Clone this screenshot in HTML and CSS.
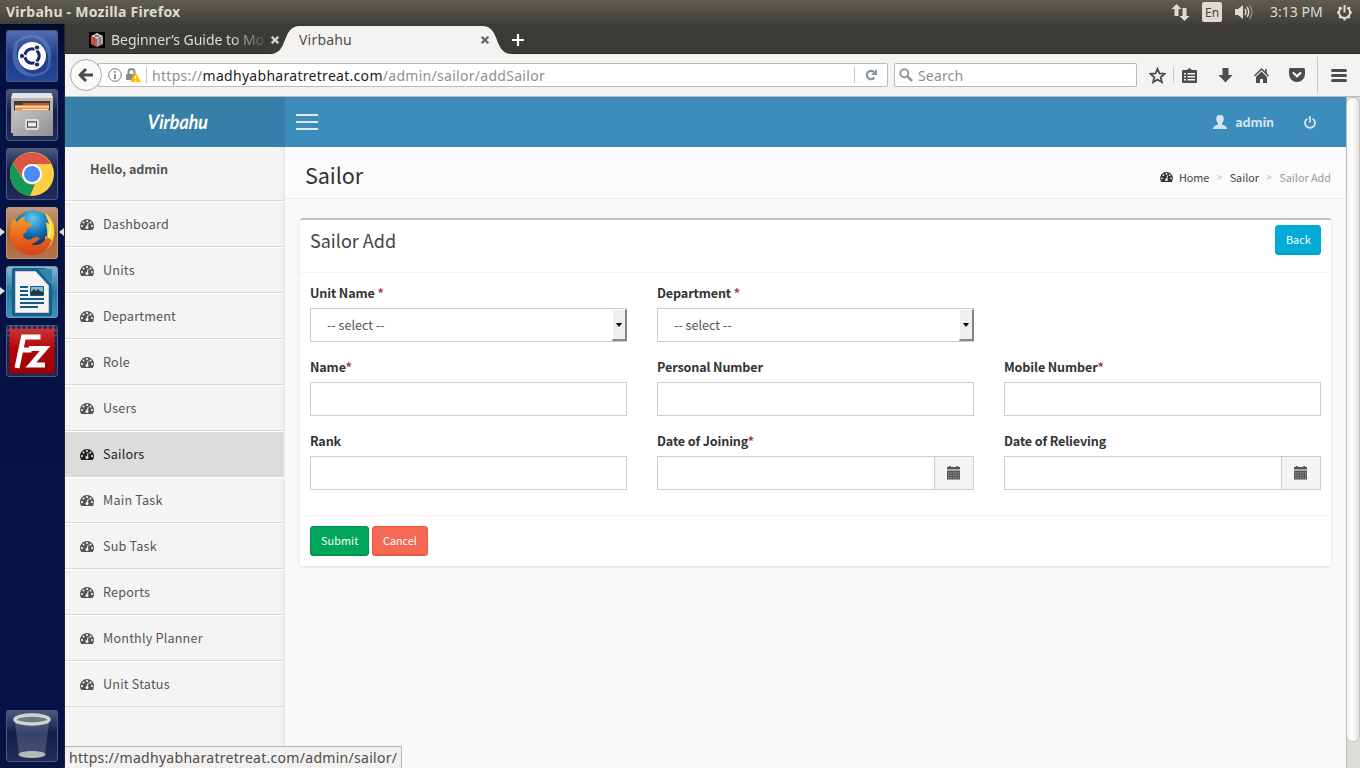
FILE: index.html
```
<!DOCTYPE html>
<html lang="en">
<head>
<meta charset="utf-8">
<title>Virbahu</title>
<link rel="stylesheet" href="styles.css">
</head>
<body>
<svg class="defs" width="0" height="0">
  <symbol id="dash" viewBox="0 256 1792 1408"><path d="M384 1152q0-53-37.5-90.5t-90.5-37.5-90.5 37.5-37.5 90.5 37.5 90.5 90.5 37.5 90.5-37.5 37.5-90.5zm192-448q0-53-37.5-90.5t-90.5-37.5-90.5 37.5-37.5 90.5 37.5 90.5 90.5 37.5 90.5-37.5 37.5-90.5zm428 481l101-382q6-26-7.5-48.5t-38.5-29.5-48 6.5-30 39.5l-101 382q-60 5-107 43.5t-63 98.5q-20 77 20 146t117 89 146-20 89-117q16-60-6-117t-72-91zm660-33q0-53-37.5-90.5t-90.5-37.5-90.5 37.5-37.5 90.5 37.5 90.5 90.5 37.5 90.5-37.5 37.5-90.5zm-640-640q0-53-37.5-90.5t-90.5-37.5-90.5 37.5-37.5 90.5 37.5 90.5 90.5 37.5 90.5-37.5 37.5-90.5zm448 192q0-53-37.5-90.5t-90.5-37.5-90.5 37.5-37.5 90.5 37.5 90.5 90.5 37.5 90.5-37.5 37.5-90.5zm320 448q0 261-141 483-19 29-54 29h-1402q-35 0-54-29-141-221-141-483 0-182 71-348t191-286 286-191 348-71 348 71 286 191 191 286 71 348z"/></symbol>
  <symbol id="cal" viewBox="0 0 14 15"><path fill="#555" d="M0 1h2V0h2v1h6V0h2v1h2v3H0z"/><path fill="#bbb" d="M0 3.500h14V5H0z"/><path fill="#555" d="M0 5h14v9.500H0z"/><path stroke="#a9b1b8" stroke-width=".9" stroke-dasharray="1.6 1" d="M1.200 7.500h12M1.200 10h12M1.200 12.500h12"/></symbol>
  <symbol id="close" viewBox="0 0 10 10"><path d="M1.700 1.700l6.600 6.600M8.300 1.700l-6.600 6.600" stroke="currentColor" stroke-width="2.300"/></symbol>
</svg>

<header class="panel">
  <span class="panel-title">Virbahu - Mozilla Firefox</span>
  <div class="indicators">
    <svg width="19" height="17" viewBox="0 0 19 17" fill="#dfdbd2"><path d="M5.500 0l5 5H7.500v7h-4V5H.5zM13.500 17l-5-5h3V4h4v8h3z"/></svg>
    <span class="lang">En</span>
    <svg width="20" height="18" viewBox="0 0 20 18"><path fill="#dfdbd2" d="M1 6h3l5-4v14l-5-4H1z"/><g fill="none" stroke-width="1.400"><path stroke="#dfdbd2" d="M11 6q2 3 0 6M13 4q3.500 5 0 10"/><path stroke="#8c8980" d="M15.500 2q5 7 0 14"/></g></svg>
    <span class="clock">3:13 PM</span>
    <svg width="17" height="17" viewBox="0 0 17 17" fill="none" stroke="#dfdbd2"><path stroke-width="2" d="M5.800 3.700a5.500 5.500 0 1 0 5.400 0"/><path stroke-width="2" d="M8.500 1v7.500M1 8.500h2M14 8.500h2M8.500 14v2.500M2.800 3.200l1.600 1.500M14.200 3.200l-1.600 1.500M3.200 14l1.500-1.500M13.800 14l-1.500-1.500"/></svg>
  </div>
</header>

<div class="desktop">
  <nav class="launcher">
    <div class="tile ubuntu"><svg viewBox="0 0 52 52"><path fill="#6f8bc8" opacity=".5" d="M4 22C8 4 36-4 44 18c4 12-2 24-8 27C50 30 38 4 22 8 12 10 6 16 4 22zM48 30C44 48 16 54 8 34 4 24 8 12 16 8 4 20 14 46 30 44c10-2 16-8 18-14z"/><circle cx="26" cy="26" r="14" fill="#fff"/><circle cx="26" cy="26" r="7.200" fill="none" stroke="#102a6a" stroke-width="3"/><path stroke="#fff" stroke-width="1.500" d="M26 26H15M26 26l6-10M26 26l6 10"/><g fill="#102a6a" stroke="#fff"><circle cx="16" cy="26" r="2.600"/><circle cx="31" cy="17.500" r="2.600"/><circle cx="31" cy="34.500" r="2.600"/></g></svg></div>
    <div class="tile"><svg viewBox="0 0 52 52"><defs><linearGradient id="steel" x1="0" y1="0" x2="1" y2="1"><stop offset="0" stop-color="#c4c4c4"/><stop offset="1" stop-color="#8f8f8f"/></linearGradient></defs><path fill="#b5b5b5" d="M6 5q0-1 2-1h36q2 0 2 1l1 4v35H5V9z"/><path fill="#e4e4e4" d="M7 4h38l2 5H5z"/><path fill="#3c3c3c" d="M8 12h36v10H8z"/><path fill="#c9542a" d="M17 14h26v4H17z"/><path fill="#e9924a" d="M9 16h34v6H9z"/><path fill="#f8dcb4" d="M9 17h34v1.500H9z"/><path fill="#fbe9d0" d="M16 20h26v1H16z"/><path fill="url(#steel)" d="M7 21.500h40V47H7z"/><rect x="20" y="31" width="12" height="9" rx="1.500" fill="#999" stroke="#ddd" stroke-width="2"/><rect x="21.500" y="33" width="9" height="5" fill="#eee" stroke="#444"/></svg></div>
    <div class="tile"><svg viewBox="0 0 52 52"><circle cx="26" cy="26" r="22" fill="#ffcd40"/><path fill="#db5547" d="M7 15A22 22 0 0 1 45 16H26a10 10 0 0 0-9 14z"/><path fill="#149959" d="M7 15l10 16a10 10 0 0 0 12 5l-5 12A22 22 0 0 1 7 15z"/><circle cx="26" cy="26" r="10" fill="#fff"/><circle cx="26" cy="26" r="8" fill="#4a8af4"/></svg></div>
    <div class="tile firefox"><svg viewBox="0 0 52 52"><defs><radialGradient id="globe" cx=".5" cy=".2" r=".75"><stop offset="0" stop-color="#5fcbef"/><stop offset=".5" stop-color="#1672b5"/><stop offset="1" stop-color="#0a2250"/></radialGradient><linearGradient id="fox" x1="0" y1="0" x2="0" y2="1"><stop offset="0" stop-color="#f5a030"/><stop offset=".5" stop-color="#ec6a1e"/><stop offset="1" stop-color="#d6401a"/></linearGradient></defs><circle cx="27" cy="23.500" r="20" fill="url(#globe)"/><path fill="#f9d938" d="M39 6c9 6 11 16 8 27-2 7-8 11-14 13 5-5 7-11 6-17l2 1c1-8-1-12-1-15l3 2c-1-5-3-7-4-11z"/><path fill="#fff3a0" d="M43 13c3 7 3 16-3 23 3-8 4-14 3-23z"/><path fill="url(#fox)" d="M7 12c2 1 3 2 4 3 2-3 5-5 8-6-1 3-1 4 1 6 3 1 5 0 6 2 0 3-4 4-5 5 0 4-3 4-4 6 1 5 7 6 10 3 3-2 6-1 7 1-3 1-4 4-9 5 6 3 13-1 16-7l5 3c-3 9-10 15-20 15C13 48 4 38 4 27c0-6 1-11 3-15z"/></svg></div>
    <div class="tile writer"><svg viewBox="0 0 52 52"><path fill="#14608f" d="M6 4q0-2 2-2h29q9 0 9 10v36q0 2-2 2H8q-2 0-2-2z"/><path fill="#3384b0" d="M32 3h14v17z"/><path fill="#f4f4f4" stroke="#ccc" d="M9.500 5.500h20l13 14v27h-33z"/><path stroke="#145a8c" stroke-width="2" d="M14 21h8M14 25h8M14 29h8M14 33h24M14 37h24M14 41h18"/><path fill="#7cc0e8" stroke="#145a8c" d="M24.500 20.500h13v9h-13z"/><path fill="#333" d="M25 29v-3l3-3 2 2 2-2 2 2 3 1v3z"/></svg></div>
    <div class="tile"><svg viewBox="0 0 52 52"><defs><linearGradient id="stamp" x1="0" y1="0" x2="0" y2="1"><stop offset="0" stop-color="#c8383c"/><stop offset=".45" stop-color="#b50408"/><stop offset="1" stop-color="#960206"/></linearGradient></defs><path fill="url(#stamp)" d="M3 3h46v46H3z"/><rect x="2.500" y="2.500" width="47" height="47" fill="none" stroke="#1d2652" stroke-width="3" stroke-linecap="round" stroke-dasharray="0 5.220"/><path fill="none" stroke="#fff" stroke-width="5" d="M11 43l6.500-31h17M13.500 25h12M23 23.500h16L25 40h14"/></svg></div>
    <div class="tile trash"><svg viewBox="0 0 52 52"><path fill="#9fa8c0" fill-opacity=".28" d="M9 12h34l-4 33H13z"/><ellipse cx="26" cy="44.500" rx="13.500" ry="3.500" fill="#b8b9b5"/><ellipse cx="26" cy="9.500" rx="17" ry="4.500" fill="#6d7488" stroke="#d2d3cd" stroke-width="3.500"/></svg></div>
    <i class="mark m1"></i><i class="mark m2"></i><i class="mark focus"></i>
  </nav>

  <main class="browser">
    <div class="tabs">
      <div class="tab">
        <svg width="16" height="16" viewBox="0 0 16 16"><path fill="#000" d="M0 0h16v16H0z"/><path fill="#ddd" d="M8 1l6 3-6 3-6-3z"/><path fill="#a9a9a9" d="M8 7l6-3v8l-6 3z"/><path fill="#d9513a" d="M2 4l6 3v8l-6-3z"/><path fill="none" stroke="#666" d="M5 2.500l6 3v8M11 2.500l-6 3v8"/></svg>
        <span class="tab-text faded">Beginner’s Guide to Mo</span>
        <svg class="x light" width="10" height="10"><use href="#close"/></svg>
      </div>
      <div class="tab active">
        <svg class="shape" width="242" height="28" viewBox="0 0 242 28"><path fill="#f4f3f1" d="M0 28C19 28 11 0 30 0H212C231 0 223 28 242 28z"/></svg>
        <span class="tab-text">Virbahu</span>
        <svg class="x" width="10" height="10"><use href="#close"/></svg>
      </div>
      <svg class="plus" width="14" height="14" viewBox="0 0 14 14"><path d="M7 1v12M1 7h12" stroke="#fff" stroke-width="2.200"/></svg>
    </div>
    <div class="toolbar">
      <div class="back"><svg width="16" height="14" viewBox="0 0 16 14"><path fill="none" stroke="#4c4c4c" stroke-width="3" d="M8 1L2 7l6 6M2.500 7H15"/></svg></div>
      <div class="urlbar">
        <svg width="14" height="14" viewBox="0 0 14 14"><circle cx="7" cy="7" r="6.300" fill="none" stroke="#777"/><path stroke="#777" stroke-width="1.500" d="M7 6v5M7 3v1.700"/></svg>
        <svg class="lock" width="15" height="15" viewBox="0 0 15 15"><path fill="none" stroke="#8a8a8a" stroke-width="2" d="M2.500 7V4a3 3 0 0 1 6 0v3"/><path fill="#8a8a8a" d="M0 6h10v6H0z"/><path fill="#ffbf00" d="M9.500 4l5.500 10H4z"/><path stroke="#fff" stroke-width="1.300" d="M9.500 8v3M9.500 12v1.200"/></svg>
        <i class="sep"></i>
        <span class="url">https://<b>madhyabharatretreat.com</b>/admin/sailor/addSailor</span>
        <i class="sep"></i>
        <svg class="reload" width="12" height="12" viewBox="0 0 12 12"><path fill="none" stroke="#8795a1" stroke-width="2.200" d="M9.500 8.500A4.200 4.200 0 1 1 9 3"/><path fill="#8795a1" d="M12 0v6H6z"/></svg>
      </div>
      <div class="search"><svg width="14" height="14" viewBox="0 0 14 14" fill="none" stroke="#999" stroke-width="2"><circle cx="5.300" cy="5.300" r="4"/><path stroke-width="2.600" d="M8.500 8.500l4.500 4.500"/></svg><span>Search</span></div>
      <div class="tools">
        <svg width="17" height="17" viewBox="0 0 17 17"><path fill="none" stroke="#4c4c4c" stroke-width="1.800" d="M8.500 1.800l2 4.700 5 .4-3.800 3.300 1.200 5-4.400-2.700-4.400 2.700 1.200-5L1.500 6.900l5-.4z"/></svg>
        <i class="sep"></i>
        <svg width="15" height="15" viewBox="0 0 15 15"><path fill="#4c4c4c" d="M5 2l2.500-2L10 2h4q1 0 1 1v11q0 1-1 1H1q-1 0-1-1V3q0-1 1-1z"/><path stroke="#f4f3f1" stroke-width="1.400" d="M2 5.800h2M5.500 5.800H13M2 8.800h2M5.500 8.800H13M2 11.800h2M5.500 11.800H13"/></svg>
        <svg width="15" height="15" viewBox="0 0 15 15"><path fill="#4c4c4c" d="M4.500 0h6v7H14.500l-7 7.500-7-7.500h4z"/></svg>
        <svg width="15" height="15" viewBox="0 0 15 15"><path fill="none" stroke="#4c4c4c" stroke-width="1.500" d="M.5 8l7-7 7 7M12 1v4"/><path fill="#4c4c4c" d="M7.500 3.500L13 9v6H9v-4H6v4H2V9z"/></svg>
        <svg width="16" height="14" viewBox="0 0 16 14"><path fill="#4c4c4c" d="M1.500 0h13Q16 0 16 1.500V6A8 8 0 0 1 0 6V1.500Q0 0 1.500 0z"/><path fill="none" stroke="#fff" stroke-width="2" stroke-linecap="round" d="M4.500 5L8 8.300 11.500 5"/></svg>
        <i class="sep tall"></i>
        <svg width="16" height="13" viewBox="0 0 16 13"><path stroke="#4c4c4c" stroke-width="3" stroke-linecap="round" d="M1.500 1.500h13M1.500 6.500h13M1.500 11.500h13"/></svg>
      </div>
    </div>

    <div class="viewport">
      <div class="page">
        <div class="topbar">
          <div class="brand"><span>Virbahu</span></div>
          <div class="navbar">
            <div class="burger"><i></i><i></i><i></i></div>
            <div class="account">
              <svg width="14" height="14" viewBox="0 0 14 14" fill="#d3e5f1"><path d="M7 0c3 0 4 2 3.800 4.300C10.600 6.500 9.500 7.500 9 8.300v1.200c1.500.8 5 1.300 5 4.500H0c0-3.200 3.500-3.700 5-4.500V8.300C4.500 7.500 3.400 6.500 3.200 4.300 3 2 4 0 7 0z"/></svg>
              <span>admin</span>
              <svg class="power" width="12" height="13" viewBox="0 0 12 13" fill="none" stroke="#d3e5f1" stroke-width="1.800"><path d="M3.300 2.700a5 5 0 1 0 5.400 0M6 0v6.500"/></svg>
            </div>
          </div>
        </div>
        <div class="columns">
          <aside class="sidebar">
            <div class="hello">Hello, admin</div>
            <a class="item"><svg><use href="#dash"/></svg>Dashboard</a>
            <a class="item"><svg><use href="#dash"/></svg>Units</a>
            <a class="item"><svg><use href="#dash"/></svg>Department</a>
            <a class="item"><svg><use href="#dash"/></svg>Role</a>
            <a class="item"><svg><use href="#dash"/></svg>Users</a>
            <a class="item current"><svg><use href="#dash"/></svg>Sailors</a>
            <a class="item"><svg><use href="#dash"/></svg>Main Task</a>
            <a class="item"><svg><use href="#dash"/></svg>Sub Task</a>
            <a class="item"><svg><use href="#dash"/></svg>Reports</a>
            <a class="item"><svg><use href="#dash"/></svg>Monthly Planner</a>
            <a class="item"><svg><use href="#dash"/></svg>Unit Status</a>
          </aside>
          <section class="content">
            <div class="content-head">
              <h1>Sailor</h1>
              <div class="crumbs"><svg><use href="#dash"/></svg><span>Home</span><i>&gt;</i><span>Sailor</span><i>&gt;</i><span class="last">Sailor Add</span></div>
            </div>
            <div class="box">
              <div class="box-head"><h3>Sailor Add</h3><button class="btn info">Back</button></div>
              <div class="box-body">
                <div class="field"><label>Unit Name <em>*</em></label><div class="control select"><span>-- select --</span><i class="arrow"></i></div></div>
                <div class="field"><label>Department <em>*</em></label><div class="control select"><span>-- select --</span><i class="arrow"></i></div></div>
                <div class="field first"><label>Name<em>*</em></label><div class="control"></div></div>
                <div class="field"><label>Personal Number</label><div class="control"></div></div>
                <div class="field"><label>Mobile Number<em>*</em></label><div class="control"></div></div>
                <div class="field"><label>Rank</label><div class="control"></div></div>
                <div class="field"><label>Date of Joining<em>*</em></label><div class="control date"><span class="addon"><svg width="13" height="14"><use href="#cal"/></svg></span></div></div>
                <div class="field"><label>Date of Relieving</label><div class="control date"><span class="addon"><svg width="13" height="14"><use href="#cal"/></svg></span></div></div>
              </div>
              <div class="box-foot"><button class="btn success">Submit</button><button class="btn danger">Cancel</button></div>
            </div>
          </section>
        </div>
      </div>
      <div class="scroll"><div class="thumb"></div></div>
      <div class="status">https://madhyabharatretreat.com/admin/sailor/</div>
    </div>
  </main>
</div>
</body>
</html>
```
FILE: styles.css
```
* { box-sizing: border-box; }
body { margin: 0; width: 1360px; height: 768px; overflow: hidden; font-family: "Noto Sans", "Open Sans", sans-serif; display: flex; flex-direction: column; }
svg { display: block; flex: none; }
.defs { position: absolute; }
i, em { font-style: normal; }

.panel { height: 24px; flex: none; display: flex; align-items: center; justify-content: space-between; padding: 0 7px 0 6px; background: linear-gradient(#5f5d52, #403f3a); color: #dfdbd2; font-size: 14px; }
.panel-title { font-weight: 700; font-size: 14px; letter-spacing: 0.25px; white-space: nowrap; margin-top: -2px; }
.indicators { display: flex; align-items: center; }
.lang { margin-left: 12px; margin-right: 12px; width: 20px; height: 20px; border-radius: 2px; background: #dfdbd2; color: #45433e; font-size: 12px; line-height: 21px; text-align: center; }
.clock { margin: -1px 13px 0 16px; width: 53px; white-space: nowrap; }

.desktop { flex: 1; display: flex; min-height: 0; }
.launcher { position: relative; width: 65px; flex: none; background: linear-gradient(#020b2c, #041243 40px, #051444); border-right: 1px solid #20223a; padding: 6px; display: flex; flex-direction: column; gap: 7px; }
.tile { width: 52px; height: 52px; flex: none; border-radius: 4px; background: linear-gradient(#4c5a80, #131d49 45%, #222e5a); box-shadow: inset 0 0 0 1px #4b5880; }
.tile svg { width: 52px; height: 52px; }
.ubuntu { background: linear-gradient(#5670b4, #1d3b8a 50%, #27479a); }
.firefox { background: linear-gradient(#c39b7d, #ab673b 50%, #b3734a); box-shadow: inset 0 0 0 1px #c49874; }
.writer { background: linear-gradient(#8ab7d0, #2778a5 50%, #4590b9); box-shadow: inset 0 0 0 1px #5c9dc0; }
.trash { margin-top: auto; }
.mark { position: absolute; left: 0; border: 4px solid transparent; border-left: 5px solid #ddd; border-right: 0; }
.m1 { top: 204px; }
.m2 { top: 263px; }
.focus { top: 204px; left: auto; right: 0; border-left: 0; border-right: 5px solid #ddd; }

.browser { flex: 1; display: flex; flex-direction: column; min-width: 0; }
.tabs { height: 30px; flex: none; background: #3c3b37; border-bottom: 1px solid #2a2926; display: flex; align-items: flex-start; font-size: 14px; }
.tab { position: relative; display: flex; align-items: center; flex: none; height: 32px; width: 211px; padding-left: 24px; color: #dedbd4; }
.tab.active { width: 242px; margin-left: -6px; padding-left: 29px; color: #4c4c4c; }
.shape { position: absolute; left: 0; top: 2px; }
.tab-text { position: relative; flex: none; white-space: nowrap; width: 158px; margin-left: 6px; margin-top: -1px; letter-spacing: 0.1px; }
.active .tab-text { margin-left: 0; width: 181px; letter-spacing: 0.2px; }
.faded { letter-spacing: -0.05px; -webkit-mask-image: linear-gradient(90deg, #000 120px, transparent 158px); mask-image: linear-gradient(90deg, #000 120px, transparent 158px); }
.x { position: relative; color: #666; }
.x.light { color: #dedbd4; margin-left: 1px; }
.plus { margin: 9px 0 0 -1px; }

.toolbar { height: 43px; flex: none; background: #f4f3f1; border-bottom: 1px solid #bdbab5; display: flex; align-items: center; padding-left: 5px; font-size: 14px; }
.back { width: 32px; height: 32px; flex: none; border: 1px solid #aaa; border-radius: 50%; background: #fafafa; display: flex; align-items: center; justify-content: center; z-index: 1; }
.urlbar { width: 790px; height: 24px; margin-left: -4px; border: 1px solid #bdbab6; border-radius: 0 2px 2px 0; background: #fff; display: flex; align-items: center; padding-left: 9px; }
.lock { margin-left: 4px; }
.sep { width: 1px; height: 16px; background: #c8c6c3; flex: none; }
.urlbar > .sep { margin-left: 5px; }
.url { width: 702px; margin-left: 5px; color: #8f8f8f; white-space: nowrap; letter-spacing: 0.29px; flex: none; }
.url b { font-weight: 400; color: #222; }
.urlbar > .url + .sep { margin-left: 0; }
.reload { margin-left: 10px; }
.search { width: 243px; height: 24px; margin-left: 6px; border: 1px solid #bdbab6; border-radius: 2px; background: #fff; display: flex; align-items: center; gap: 5px; padding-left: 4px; color: #8e8e8e; letter-spacing: 0.15px; }
.tools { display: flex; align-items: center; flex: 1; padding-left: 12px; }
.tools > :nth-child(2) { margin: 0 8px 0 7px; }
.tools > :nth-child(4), .tools > :nth-child(5) { margin-left: 21px; }
.tools > :nth-child(6) { margin-left: 20px; }
.tools .tall { height: 36px; margin: 0 13px 0 12px; }

.viewport { position: relative; flex: 1; display: flex; min-height: 0; }
.page { width: 1281px; display: flex; flex-direction: column; font-family: "Noto Sans CJK SC", "Noto Sans", sans-serif; font-size: 12.6px; color: #333; background: #f9f9f9; }
.scroll { width: 14px; border-left: 1px solid #bbb; background: #dedcd9; }
.thumb { height: 645px; border: 1px solid #c5c3c0; border-left: 0; border-radius: 7px; background: linear-gradient(90deg, #f7f6f5, #fff 40%, #e6e4e2); }
.status { position: absolute; left: 0; bottom: 0; width: 337px; height: 22px; background: #f2f1f0; border: 1px solid #b8b6b3; border-left: 0; border-bottom: 0; font-size: 14px; line-height: 22px; color: #4c4c4c; padding-left: 4px; white-space: nowrap; letter-spacing: 0.29px; }

.topbar { height: 50px; flex: none; display: flex; }
.brand { width: 220px; background: #367fa9; color: #fff; display: flex; align-items: center; justify-content: center; padding-left: 6px; font: italic 700 20px/50px Lato, sans-serif; }
.brand span { transform: scaleX(0.89) skewX(-3deg); margin-top: -2px; }
.navbar { flex: 1; background: #3c8dbc; display: flex; align-items: center; justify-content: space-between; padding: 0 30px 0 11px; }
.burger { display: flex; flex-direction: column; gap: 5px; width: 22px; padding-bottom: 1px; }
.burger i { height: 2px; background: #dcebf4; }
.account { display: flex; align-items: center; color: #d3e5f1; font-weight: 700; }
.account span { margin: 0 30px 0 8px; line-height: 20px; letter-spacing: -0.15px; }

.columns { flex: 1; display: flex; }
.sidebar { width: 220px; background: #f4f4f4; box-shadow: inset -4px 0 4px -3px rgba(0, 0, 0, 0.08); }
.hello { height: 54px; border-bottom: 1px solid #dbdbdb; padding: 12px 0 0 25px; line-height: 20px; font-weight: 700; color: #555; letter-spacing: -0.08px; }
.item { display: flex; align-items: center; height: 46px; padding-left: 15px; border-top: 1px solid #fff; border-bottom: 1px solid #dbdbdb; line-height: 20px; color: #555; letter-spacing: 0.2px; }
.item svg { width: 14px; height: 11px; margin-right: 9px; fill: #555; }
.item.current { background: #dcdcdc; color: #222; border-right: 1px solid #eee; border-bottom-color: #dbdbdb; }
.item.current svg { fill: #222; }

.content { flex: 1; }
.content-head { height: 52px; background: #fbfbfb; border-bottom: 1px solid #ececec; display: flex; align-items: center; justify-content: space-between; padding: 5px 15px 0 20px; }
h1 { margin: 0; font-size: 21.6px; font-weight: 400; line-height: 26px; margin-top: -1px; letter-spacing: -0.1px; }
.crumbs { display: flex; align-items: center; font-size: 10.8px; line-height: 16px; color: #444; padding-top: 4px; white-space: nowrap; }
.crumbs svg { width: 13px; height: 10px; margin-right: 6px; fill: #333; }
.crumbs i { width: 20.4px; text-align: center; color: #bbb; font-size: 10px; }
.crumbs .last { color: #999; }

.box { margin: 19px 15px 0; background: #fff; border-top: 2px solid #c1c1c1; border-radius: 3px; box-shadow: 0 1px 3px rgba(0, 0, 0, 0.12); }
.box-head { height: 53px; padding: 5px 10px 0; border-bottom: 1px solid #f4f4f4; display: flex; justify-content: space-between; }
h3 { margin: 4px 0 0; font-size: 18px; font-weight: 400; line-height: 22px; color: #444; }
.btn { height: 30px; padding: 0 10px 2px; border: 1px solid; border-radius: 3px; font: 400 10.8px/26px "Noto Sans CJK SC", "Noto Sans", sans-serif; color: #fff; white-space: nowrap; box-shadow: inset 0 -1px 0 rgba(0, 0, 0, 0.09); }
.info { background: #00acd6; border-color: #00acd6; width: 46px; }
.success { background: #00a65a; border-color: #008d4c; width: 59px; letter-spacing: 0.1px; }
.danger { background: #f56954; border-color: #f4543c; width: 56px; }
.box-body { display: grid; grid-template-columns: repeat(3, 317px); column-gap: 30px; row-gap: 15px; padding: 10px 10px 25px; }
.first { grid-column: 1; }
label { display: block; height: 20px; margin-bottom: 5px; line-height: 20px; font-weight: 700; white-space: nowrap; letter-spacing: -0.13px; }
em { color: #a94442; font-weight: 700; }
.control { height: 34px; border: 1px solid #ccc; background: #fff; display: flex; justify-content: flex-end; }
.select { justify-content: space-between; color: #555; line-height: 32px; padding-left: 16px; }
.arrow { width: 15px; margin-right: -1px; border: 1px solid #fff; border-right: 2px solid #858585; border-bottom: 2px solid #858585; background: #f0f0ee; display: flex; align-items: center; justify-content: center; }
.arrow::before { content: ""; border: 3px solid transparent; border-top: 4px solid #000; border-bottom: 0; }
.addon { width: 39px; padding-right: 2px; border-left: 1px solid #ccc; background: #f4f4f4; display: flex; align-items: center; justify-content: center; }
.box-foot { border-top: 1px solid #f4f4f4; padding: 10px; display: flex; gap: 3px; }
```
